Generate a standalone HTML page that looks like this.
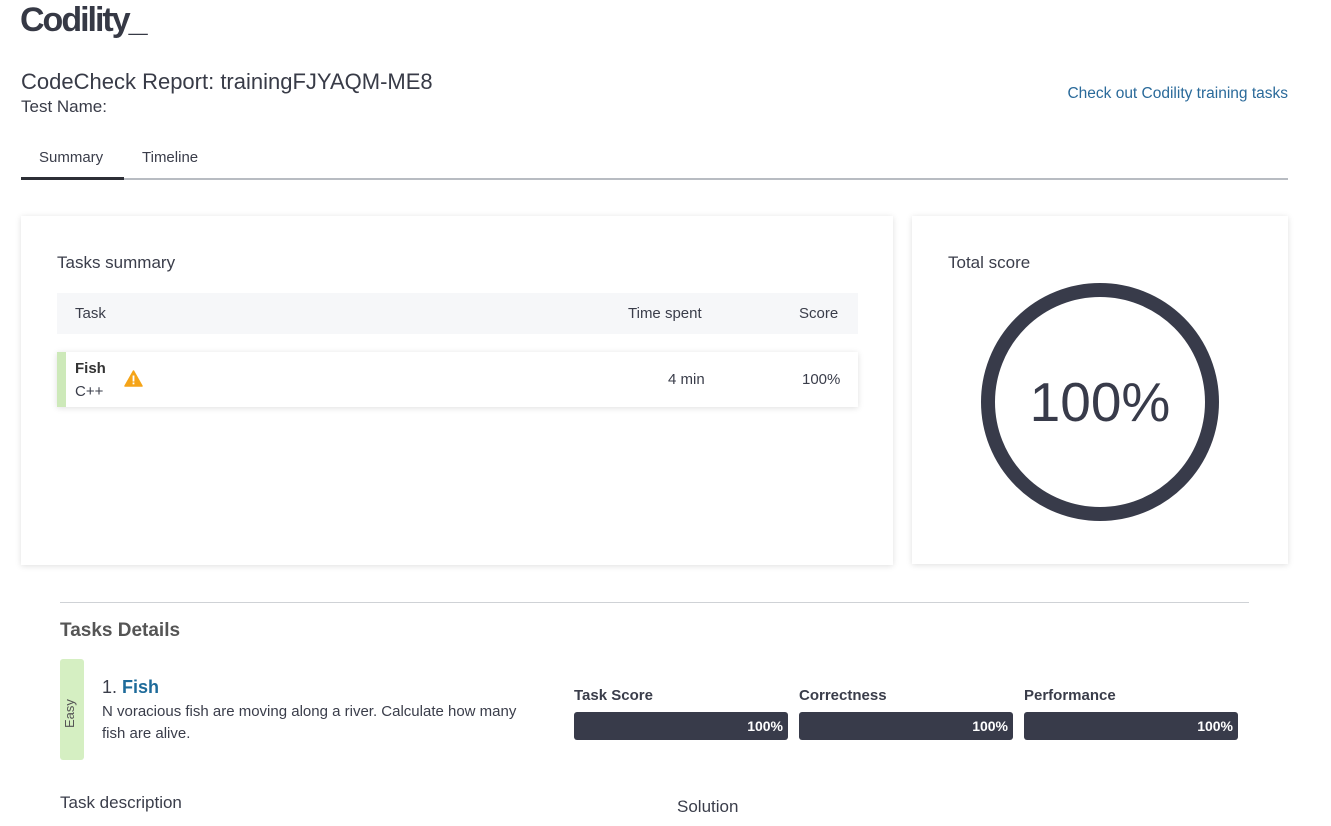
<!DOCTYPE html>
<html><head><meta charset="utf-8"><style>
*{box-sizing:border-box;margin:0;padding:0}
body{width:1331px;height:826px;overflow:hidden;background:#fff;font-family:"Liberation Sans",sans-serif;color:#3a3d4a;position:relative}
.a{position:absolute;white-space:nowrap}
.card{position:absolute;background:#fff;box-shadow:0 1px 6px rgba(0,0,0,.13)}
.bar{position:absolute;height:28px;background:#383b4a;border-radius:3px;color:#fff;font-weight:bold;font-size:14px;text-align:right;padding:6px 5px 0 0}
</style></head><body>
<div class="a" style="left:20px;top:1px;font-size:34px;font-weight:bold;color:#363945;letter-spacing:-2px">Codility_</div>
<div class="a" style="left:21px;top:69px;font-size:22px;color:#383b47">CodeCheck Report: trainingFJYAQM-ME8</div>
<div class="a" style="left:21px;top:97px;font-size:17px;color:#383b47">Test Name:</div>
<div class="a" style="right:43px;top:85px;font-size:15.5px;color:#2a6a9a">Check out Codility training tasks</div>
<div class="a" style="left:39px;top:149px;font-size:15px">Summary</div>
<div class="a" style="left:142px;top:149px;font-size:15px">Timeline</div>
<div class="a" style="left:21px;top:178px;width:1267px;height:2px;background:#b8bcc2"></div>
<div class="a" style="left:21px;top:177px;width:103px;height:3px;background:#2d2f36"></div>

<div class="card" style="left:21px;top:216px;width:872px;height:349px"></div>
<div class="a" style="left:57px;top:253px;font-size:17px">Tasks summary</div>
<div class="a" style="left:57px;top:293px;width:801px;height:41px;background:#f6f7f9"></div>
<div class="a" style="left:75px;top:305px;font-size:15px">Task</div>
<div class="a" style="left:628px;top:305px;font-size:15px">Time spent</div>
<div class="a" style="left:799px;top:305px;font-size:15px">Score</div>
<div class="card" style="left:57px;top:352px;width:801px;height:55px;border-left:9px solid #cde9b9"></div>
<div class="a" style="left:75px;top:360px;font-size:15px;font-weight:bold;color:#333">Fish</div>
<div class="a" style="left:75px;top:383px;font-size:15px">C++</div>
<svg class="a" style="left:124px;top:370px" width="19" height="17" viewBox="0 0 19 17"><path d="M9.5 1 L18 16 H1 Z" fill="#f5a418" stroke="#f5a418" stroke-linejoin="round" stroke-width="1.5"/><rect x="8.6" y="5.5" width="1.8" height="6" fill="#fff"/><rect x="8.6" y="12.5" width="1.8" height="1.8" fill="#fff"/></svg>
<div class="a" style="left:668px;top:371px;font-size:15px">4 min</div>
<div class="a" style="left:802px;top:371px;font-size:15px">100%</div>

<div class="card" style="left:912px;top:216px;width:376px;height:348px"></div>
<div class="a" style="left:948px;top:253px;font-size:17px">Total score</div>
<svg class="a" style="left:980px;top:282px" width="240" height="240"><circle cx="120" cy="120" r="112" fill="none" stroke="#383b4a" stroke-width="14"/></svg>
<div class="a" style="left:980px;top:370px;width:240px;text-align:center;font-size:55px;color:#383b4a">100%</div>

<div class="a" style="left:60px;top:602px;width:1189px;height:1px;background:#cfd2d6"></div>
<div class="a" style="left:60px;top:620px;font-size:19px;font-weight:bold;color:#555">Tasks Details</div>
<div class="a" style="left:60px;top:659px;width:24px;height:101px;background:#d5efc2;border-radius:3px"></div>
<div class="a" style="left:62px;top:728px;font-size:13px;color:#555;transform:rotate(-90deg);transform-origin:0 0">Easy</div>
<div class="a" style="left:102px;top:677px;font-size:18px">1. <span style="color:#1e6b9a;font-weight:bold">Fish</span></div>
<div class="a" style="left:102px;top:701px;font-size:15px;line-height:22px;white-space:normal;width:430px">N voracious fish are moving along a river. Calculate how many fish are alive.</div>
<div class="a" style="left:574px;top:687px;font-size:15px;font-weight:bold">Task Score</div>
<div class="a" style="left:799px;top:687px;font-size:15px;font-weight:bold">Correctness</div>
<div class="a" style="left:1024px;top:687px;font-size:15px;font-weight:bold">Performance</div>
<div class="bar" style="left:574px;top:712px;width:214px">100%</div>
<div class="bar" style="left:799px;top:712px;width:214px">100%</div>
<div class="bar" style="left:1024px;top:712px;width:214px">100%</div>
<div class="a" style="left:60px;top:793px;font-size:17px">Task description</div>
<div class="a" style="left:677px;top:797px;font-size:17px">Solution</div>
</body></html>
